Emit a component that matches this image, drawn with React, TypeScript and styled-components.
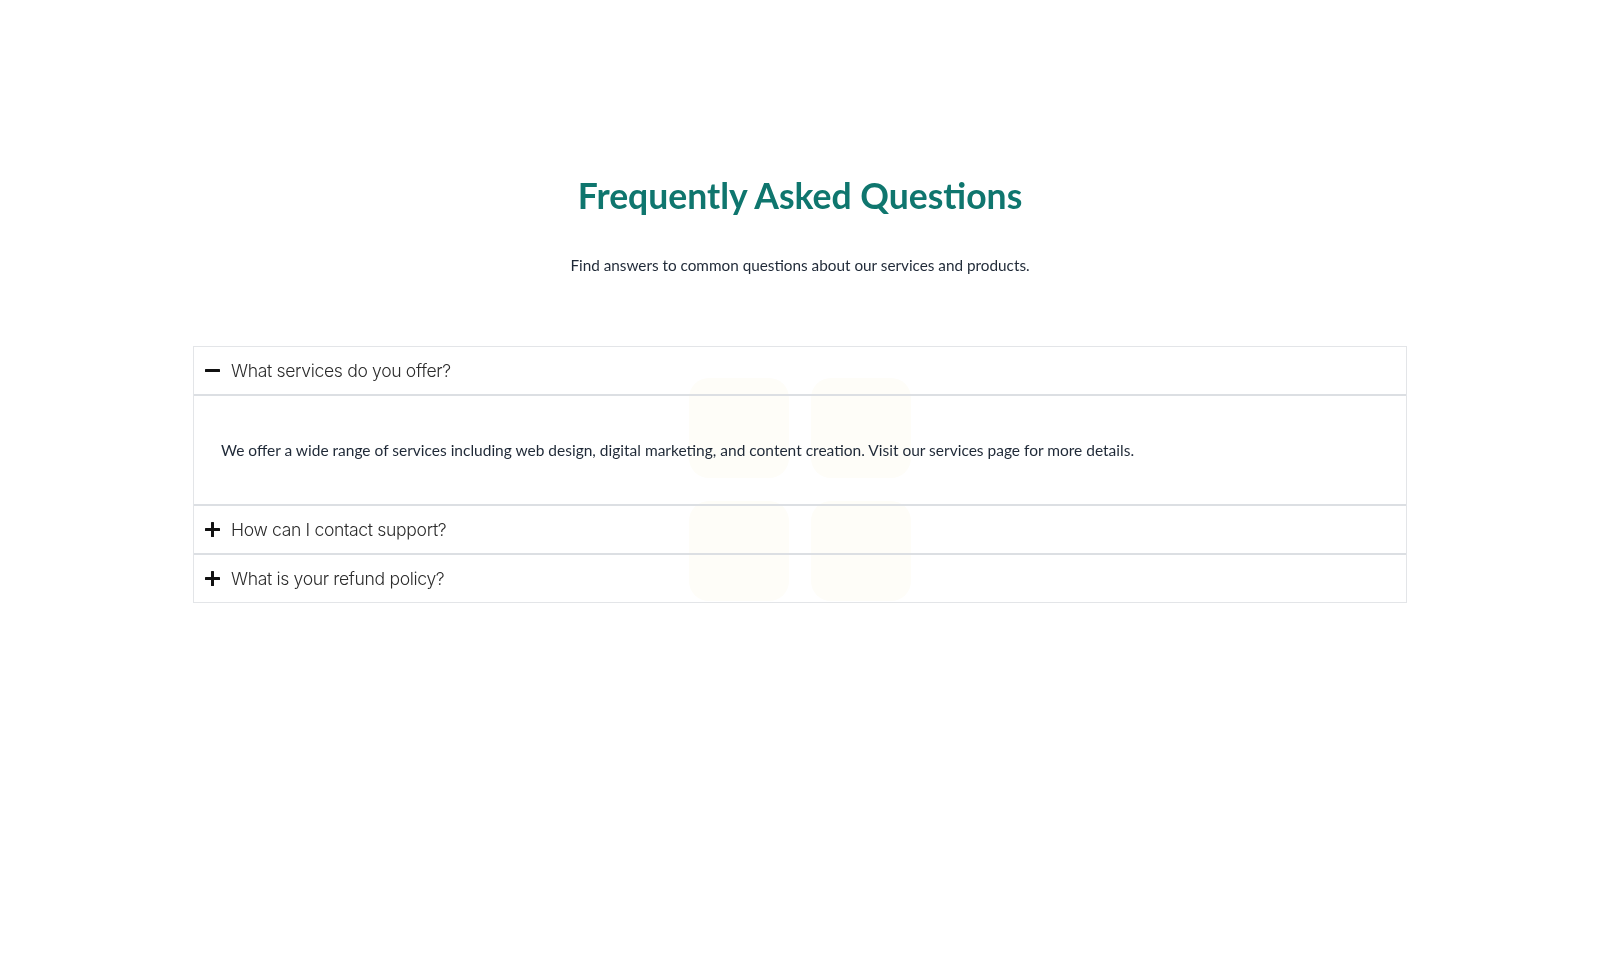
import { useState } from "react";
import styled, { createGlobalStyle } from "styled-components";

const GlobalStyle = createGlobalStyle`
  * {
    box-sizing: border-box;
  }
  body {
    margin: 0;
    background: #ffffff;
    font-family: "Lato", "Noto Sans", sans-serif;
    color: #1f2937;
  }
`;

const Backdrop = styled.div`
  position: fixed;
  inset: 0;
  display: grid;
  place-content: center;
  grid-template-columns: repeat(2, 100px);
  grid-auto-rows: 100px;
  gap: 23px 22px;
  pointer-events: none;
  z-index: 0;
`;

const Tile = styled.div`
  border-radius: 20px;
  background: #fefdf8;
`;

const Page = styled.main`
  position: relative;
  z-index: 1;
  padding: 176px 193px 0;
  display: flex;
  flex-direction: column;
  align-items: center;
`;

const Title = styled.h2`
  margin: 0;
  font-size: 35.5px;
  line-height: 40px;
  font-weight: 700;
  color: #0f766e;
`;

const Subtitle = styled.p`
  margin: 38px 0 0;
  font-size: 15.3px;
  line-height: 22px;
  color: #1f2937;
`;

const List = styled.div`
  margin-top: 70px;
  align-self: stretch;
  border: 1px solid #e3e5e8;
`;

const Item = styled.div<{ $last?: boolean }>`
  border-bottom: ${(p) => (p.$last ? "none" : "2px solid #dcdfe3")};
`;

const Question = styled.button`
  all: unset;
  box-sizing: border-box;
  width: 100%;
  height: 47px;
  padding: 0 11px;
  display: flex;
  align-items: center;
  gap: 11px;
  cursor: pointer;
  font-family: "Inter", "Lato", sans-serif;
  font-size: 17.6px;
  font-weight: 300;
  color: #2b2b2b;
  letter-spacing: -0.35px;
`;

const Sign = styled.svg`
  width: 15px;
  height: 15px;
  flex: none;
`;

const Answer = styled.div`
  border-top: 2px solid #dcdfe3;
  padding: 43px 27px;
  font-size: 15.5px;
  line-height: 22px;
  color: #1f2937;
`;

const faqs = [
  {
    q: "What services do you offer?",
    a: "We offer a wide range of services including web design, digital marketing, and content creation. Visit our services page for more details.",
  },
  {
    q: "How can I contact support?",
    a: "You can reach our support team by email or through the contact form on our website. We usually reply within one business day.",
  },
  {
    q: "What is your refund policy?",
    a: "If you are not satisfied with your purchase, you can request a full refund within 30 days.",
  },
];

const App = () => {
  const [open, setOpen] = useState<number | null>(0);

  return (
    <>
      <GlobalStyle />
      <Backdrop>
        <Tile />
        <Tile />
        <Tile />
        <Tile />
      </Backdrop>
      <Page>
        <Title>Frequently Asked Questions</Title>
        <Subtitle>
          Find answers to common questions about our services and products.
        </Subtitle>
        <List>
          {faqs.map((f, i) => (
            <Item key={f.q} $last={i === faqs.length - 1}>
              <Question onClick={() => setOpen(open === i ? null : i)}>
                <Sign viewBox="0 0 15 15">
                  <rect x="0" y="6" width="15" height="3" rx="0.5" fill="#111" />
                  {open !== i && (
                    <rect x="6" y="0" width="3" height="15" rx="0.5" fill="#111" />
                  )}
                </Sign>
                {f.q}
              </Question>
              {open === i && <Answer>{f.a}</Answer>}
            </Item>
          ))}
        </List>
      </Page>
    </>
  );
};

export default App;
